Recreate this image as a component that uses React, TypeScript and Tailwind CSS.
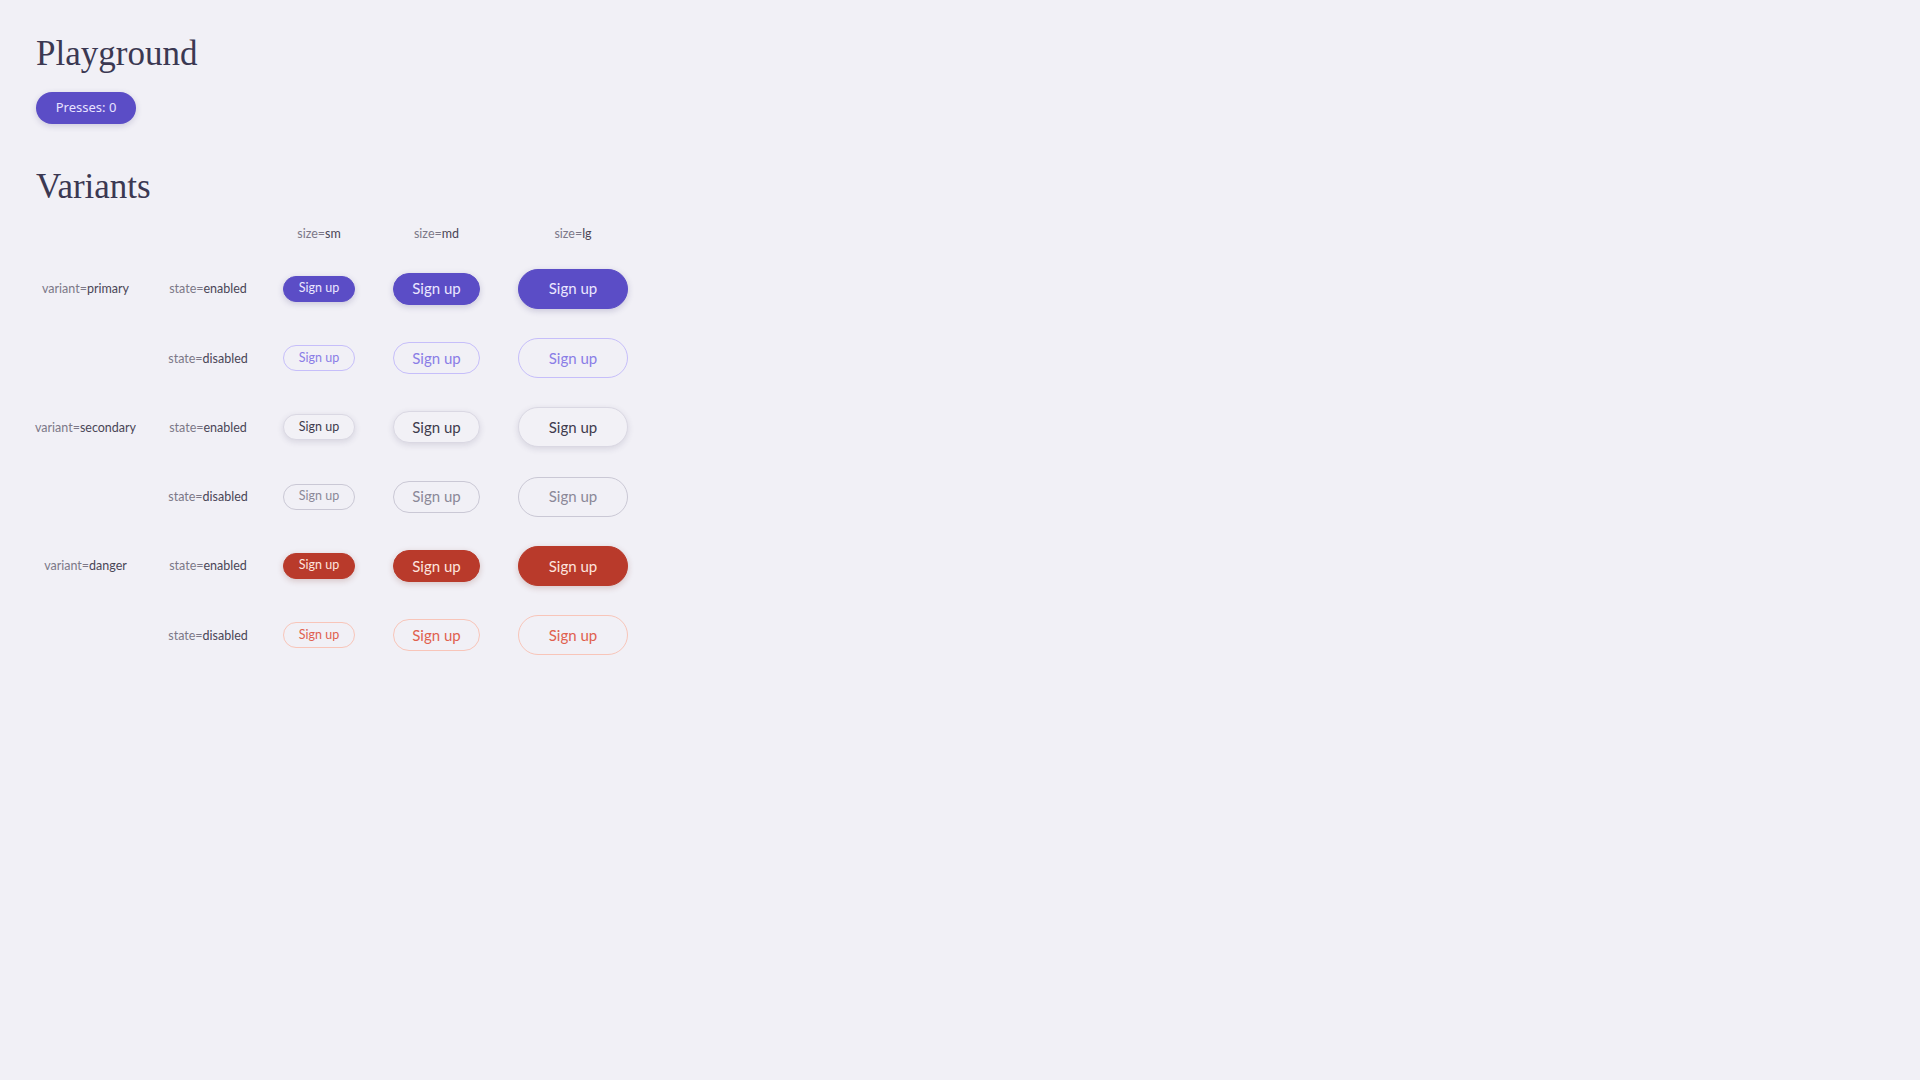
import { useState } from 'react';

type Variant = 'primary' | 'secondary' | 'danger';
type Size = 'sm' | 'md' | 'lg';

const sizeClass: Record<Size, string> = {
  sm: 'w-[72px] h-[26px] text-[12.5px]',
  md: 'w-[87px] h-[32px] text-[15px]',
  lg: 'w-[110px] h-[40px] text-[15px]',
};

const variantClass: Record<Variant, { enabled: string; disabled: string }> = {
  primary: {
    enabled: 'bg-[#5b4dc6] border-[#5b4dc6] text-[#ebe7ff] shadow-[0_2px_6px_rgba(60,50,120,0.22)]',
    disabled: 'bg-transparent border-[#c6befa] text-[#8a7de6]',
  },
  secondary: {
    enabled: 'bg-[#f2f1f6] border-[#dad8e3] text-[#3e3b4d] shadow-[0_2px_6px_rgba(60,50,90,0.14)]',
    disabled: 'bg-transparent border-[#cac8d5] text-[#8b8898]',
  },
  danger: {
    enabled: 'bg-[#b93a2b] border-[#b93a2b] text-[#fde4df] shadow-[0_2px_6px_rgba(120,40,30,0.22)]',
    disabled: 'bg-transparent border-[#f8c5b9] text-[#e0604e]',
  },
};

function Label({ k, v }: { k: string; v: string }) {
  return (
    <span className="pt-[2px] text-[12.5px] font-['Lato',sans-serif]">
      <span className="text-[#7c7888]">{k}=</span>
      <span className="text-[#4a4657]">{v}</span>
    </span>
  );
}

function Button({ variant, size, disabled }: { variant: Variant; size: Size; disabled?: boolean }) {
  const v = variantClass[variant];
  return (
    <button
      disabled={disabled}
      className={`flex items-center justify-center rounded-full border font-['Lato',sans-serif] ${sizeClass[size]} ${disabled ? v.disabled : v.enabled}`}
    >
      Sign up
    </button>
  );
}

const App: React.FC = () => {
  const [presses, setPresses] = useState(0);
  const variants: Variant[] = ['primary', 'secondary', 'danger'];
  const sizes: Size[] = ['sm', 'md', 'lg'];

  return (
    <div className="min-h-screen bg-[#f1f0f6] px-9 pt-[32px]">
      <h1 className="text-[35px] leading-[44px] text-[#3b3852] font-['Liberation_Serif',serif]">Playground</h1>
      <button
        onClick={() => setPresses(presses + 1)}
        className="mt-[16px] w-[100px] h-[32px] rounded-full bg-[#5b4dc6] text-[#e8e3ff] text-[13px] font-['Noto_Sans',sans-serif] shadow-[0_2px_6px_rgba(60,50,120,0.2)]"
      >
        Presses: {presses}
      </button>

      <h2 className="mt-[41px] text-[35px] leading-[44px] text-[#3b3852] font-['Liberation_Serif',serif]">Variants</h2>

      <div className="mt-[4px] grid grid-cols-[99px_146px_76px_159px_114px] items-center justify-items-center">
        <div className="h-[41px]" />
        <div className="h-[41px]" />
        {sizes.map((s) => (
          <div key={s} className="h-[41px] flex items-center">
            <Label k="size" v={s} />
          </div>
        ))}
        {variants.map((variant) =>
          [false, true].map((disabled) => (
            <div key={variant + String(disabled)} className="contents">
              <div className="h-[69.3px] flex items-center">
                {!disabled && <Label k="variant" v={variant} />}
              </div>
              <div className="h-[69.3px] flex items-center">
                <Label k="state" v={disabled ? 'disabled' : 'enabled'} />
              </div>
              {sizes.map((s) => (
                <div key={s} className="h-[69.3px] flex items-center">
                  <Button variant={variant} size={s} disabled={disabled} />
                </div>
              ))}
            </div>
          ))
        )}
      </div>
    </div>
  );
};

export default App;
